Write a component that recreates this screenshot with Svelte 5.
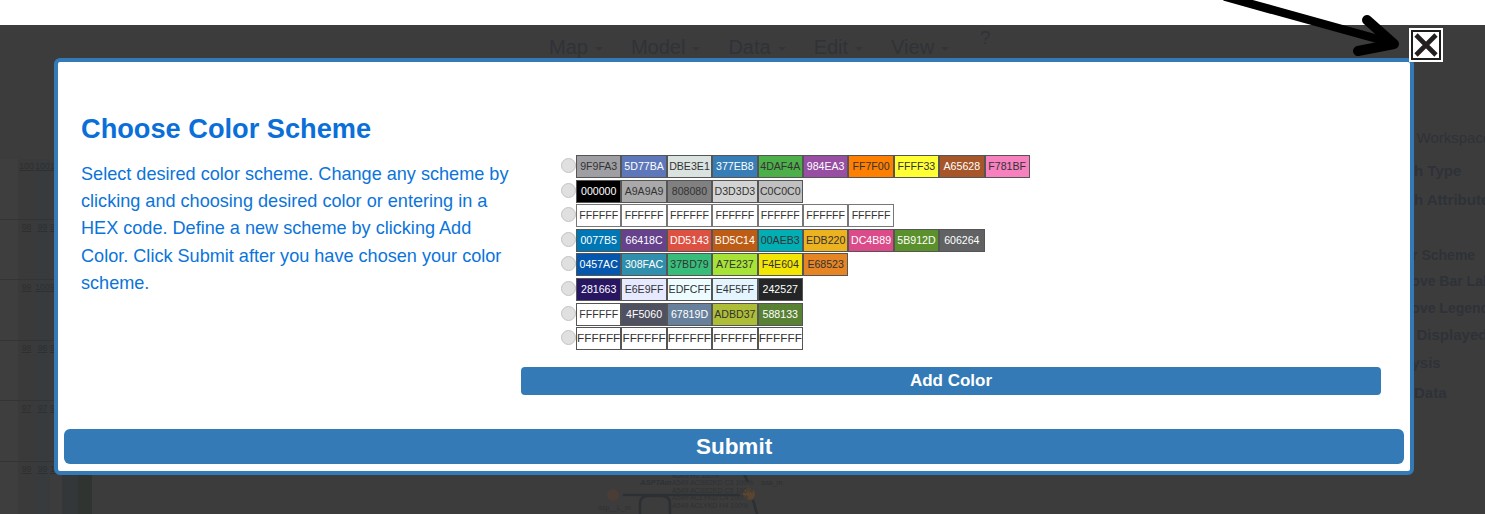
<script>
  const NAV = ["Map", "Model", "Data", "Edit", "View"];

  const SIDE = [
    { label: "Load Workspace", cls: "ws" },
    { label: "Graph Type", cls: "type" },
    { label: "Graph Attribute", cls: "attr" },
    { label: "Color Scheme", cls: "small" },
    { label: "Remove Bar Labels", cls: "small" },
    { label: "Remove Legend", cls: "small" },
    { label: "Bars Displayed", cls: "disp" },
    { label: "Analysis", cls: "type" },
    { label: "Raw Data", cls: "type" },
  ];

  const HEAT = [
    ["100", "100", "100"],
    ["98", "99", "98"],
    ["99", "100", "99"],
    ["98", "98", "97"],
    ["97", "97", "98"],
    ["99", "99", "100"],
  ];

  // light = white label, otherwise dark label
  const SCHEMES = [
    [["9F9FA3"], ["5D77BA", 1], ["DBE3E1"], ["377EB8", 1], ["4DAF4A"], ["984EA3", 1], ["FF7F00"], ["FFFF33"], ["A65628", 1], ["F781BF"]],
    [["000000", 1], ["A9A9A9"], ["808080"], ["D3D3D3"], ["C0C0C0"]],
    [["FFFFFF"], ["FFFFFF"], ["FFFFFF"], ["FFFFFF"], ["FFFFFF"], ["FFFFFF"], ["FFFFFF"]],
    [["0077B5", 1], ["66418C", 1], ["DD5143", 1], ["BD5C14", 1], ["00AEB3"], ["EDB220"], ["DC4B89", 1], ["5B912D", 1], ["606264", 1]],
    [["0457AC", 1], ["308FAC", 1], ["37BD79"], ["A7E237"], ["F4E604"], ["E68523"]],
    [["281663", 1], ["E6E9FF"], ["EDFCFF"], ["E4F5FF"], ["242527", 1]],
    [["FFFFFF"], ["4F5060", 1], ["67819D", 1], ["ADBD37"], ["588133", 1]],
    [["FFFFFF"], ["FFFFFF"], ["FFFFFF"], ["FFFFFF"], ["FFFFFF"]],
  ];
</script>

<div class="page">
  <div class="backdrop">
    <nav class="nav">
      {#each NAV as item}
        <span class="nav-item">{item}<i class="caret"></i></span>
      {/each}
      <span class="help">?</span>
    </nav>

    <div class="under">
      <div class="heat">
        {#each HEAT as row}
          <div class="heat-row">
            <span class="heat-cell"></span>
            <span class="heat-cell c1">{row[0]}</span>
            <span class="heat-cell c2">{row[1]}</span>
            <span class="heat-cell c3">{row[2]}</span>
            <span class="heat-cell c4"></span>
            <span class="heat-cell c5"></span>
          </div>
        {/each}
      </div>
      <ul class="side">
        {#each SIDE as item}
          <li class={item.cls}>{item.label}</li>
        {/each}
      </ul>
    </div>

    <svg class="network" width="220" height="44" viewBox="0 0 220 44">
      <circle cx="23" cy="25" r="6" fill="#4a3d35" />
      <circle cx="159" cy="24" r="6" fill="#5a4630" />
      <path d="M33 25H150M50 44V34q0-8 8-8h14q8 0 8 8v10M152 0l6 12M163 30l4 14" fill="none" stroke="#2c3033" stroke-width="2.6" />
      <g fill="#2e3135" font-size="7">
        <text x="50" y="15" font-weight="700" font-style="italic" font-size="7.5">ASPTAm</text>
        <text x="82" y="8">A549 H1 100%</text>
        <text x="82" y="15">A549 ACSS2KD C3 100%</text>
        <text x="82" y="23">A549 ACSS2KD C5 100%</text>
        <text x="82" y="30">A549 ACLYKD C4 100%</text>
        <text x="82" y="38">A549 ACLYKD H4 100%</text>
        <text x="171" y="15">aaa_m</text>
        <text x="8" y="40">asp__L_m</text>
      </g>
    </svg>
  </div>

  <section class="modal">
    <div class="modal-body">
      <div class="intro">
        <h2>Choose Color Scheme</h2>
        <p>Select desired color scheme. Change any scheme by clicking and choosing desired color or entering in a HEX code. Define a new scheme by clicking Add Color. Click Submit after you have chosen your color scheme.</p>
      </div>
      <div class="schemes">
        <div class="scheme-list">
          {#each SCHEMES as colors, i}
            <div class="scheme">
              <span class="radio"></span>
              {#each colors as c}
                <span
                  class="swatch"
                  class:light={c[1]}
                  class:wide={i === 7}
                  class:pale={i === 2}
                  style="background:#{c[0]}"
                >{c[0]}</span>
              {/each}
            </div>
          {/each}
        </div>
        <button class="add">Add Color</button>
      </div>
    </div>
    <button class="submit">Submit</button>
  </section>

  <svg class="arrow" width="1485" height="70" viewBox="0 0 1485 70">
    <g fill="none" stroke="#000" stroke-linecap="round" stroke-linejoin="round">
      <path d="M1226-3L1392 43" stroke-width="8.5" />
      <path d="M1367 20L1394 44L1358 51" stroke-width="10" />
    </g>
  </svg>

  <button class="close" aria-label="Close">
    <svg width="34" height="34" viewBox="0 0 34 34">
      <rect x="3" y="3" width="28" height="28" fill="#fff" stroke="#1c1c1e" stroke-width="2" />
      <path d="M7 7L27 27M27 7L7 27" stroke="#231f20" stroke-width="4.6" />
    </svg>
  </button>
</div>

<style>
  :global(body) {
    margin: 0;
    background: #fff;
  }

  .page {
    position: relative;
    width: 1485px;
    height: 514px;
    overflow: hidden;
    padding-top: 25px;
    box-sizing: border-box;
    font-family: "Liberation Sans", Arial, sans-serif;
  }

  .backdrop {
    height: 489px;
    background: #3c3c3c;
    overflow: hidden;
  }

  .nav {
    display: flex;
    align-items: baseline;
    height: 33px;
    padding-left: 549px;
    font-size: 20px;
    line-height: 44px;
    color: #2f3338;
  }

  .nav-item {
    margin-right: 28px;
    white-space: nowrap;
  }

  .caret {
    display: inline-block;
    margin-left: 7px;
    vertical-align: middle;
    border-top: 4px solid #333538;
    border-left: 4px solid transparent;
    border-right: 4px solid transparent;
  }

  .help {
    margin-left: 3px;
    position: relative;
    top: -10px;
    font-size: 19px;
  }

  .under {
    display: flex;
    justify-content: space-between;
    height: 431px;
  }

  .heat {
    margin-top: 101px;
    width: 92px;
    flex: none;
  }

  .heat-row {
    display: flex;
    height: 60.6px;
    box-sizing: border-box;
    border-bottom: 1px solid #343434;
  }

  .heat-cell {
    width: 18px;
    background: #3e3e3e;
    font-size: 8.6px;
    line-height: 14px;
    color: #2d2f31;
    text-decoration: underline;
    text-align: center;
    white-space: nowrap;
  }

  .heat-cell.c1 {
    width: 17px;
    background: #3a3a3a;
  }

  .heat-cell.c2 {
    width: 15px;
    background: #383b3d;
  }

  .heat-cell.c3 {
    width: 12px;
    text-align: left;
    background: #3c3c3c;
  }

  .heat-cell.c4 {
    width: 16px;
    background: #33373a;
  }

  .heat-cell.c5 {
    width: 14px;
    background: #303430;
  }

  .side {
    list-style: none;
    margin: 0;
    padding: 62px 0 0 0;
    width: 106px;
    flex: none;
    color: #2e3238;
    font-weight: 700;
    font-size: 15px;
    white-space: nowrap;
  }

  .side li.ws {
    font-weight: 400;
    line-height: 36px;
  }

  .side li.type {
    line-height: 30px;
  }

  .side li.attr {
    line-height: 28px;
    margin-bottom: 28px;
  }

  .side li.disp {
    line-height: 27px;
  }

  .side li.small {
    font-size: 14px;
    line-height: 26.4px;
    padding-left: 2px;
  }

  .network {
    position: absolute;
    left: 590px;
    top: 470px;
  }

  .modal {
    position: absolute;
    left: 54px;
    top: 58px;
    width: 1360px;
    height: 417px;
    box-sizing: border-box;
    border: 4px solid #337ab7;
    border-radius: 6px;
    background: #fff;
    display: flex;
    flex-direction: column;
  }

  .modal-body {
    display: flex;
    flex: 1;
    padding: 51px 29px 0 23px;
  }

  .intro {
    width: 440px;
    flex: none;
    color: #0a74da;
  }

  .intro h2 {
    margin: 0 0 16px;
    font-size: 27.2px;
    line-height: 32px;
    font-weight: 700;
    color: #0a6fd8;
  }

  .intro p {
    margin: 0;
    font-size: 18.1px;
    line-height: 27.2px;
  }

  .schemes {
    flex: 1;
    display: flex;
    flex-direction: column;
    padding-top: 42px;
  }

  .scheme-list {
    display: flex;
    flex-direction: column;
    gap: 1.6px;
    padding-left: 40px;
    height: 212px;
  }

  .scheme {
    display: flex;
    align-items: center;
    height: 23px;
  }

  .radio {
    width: 13px;
    height: 13px;
    margin-bottom: 2px;
    flex: none;
    border: 1px solid #c4c4c4;
    border-radius: 50%;
    background: #e0e0e0;
  }

  .swatch {
    width: 45.4px;
    height: 23px;
    flex: none;
    box-sizing: border-box;
    border: 1px solid #555;
    font-size: 10.6px;
    line-height: 21px;
    text-align: center;
    color: #333;
    overflow: hidden;
    white-space: nowrap;
  }

  .swatch.light {
    color: #fff;
  }

  .swatch.pale {
    border-color: #777;
  }

  .swatch.wide {
    font-size: 11.8px;
    color: #333;
  }

  .add,
  .submit {
    display: block;
    border: 0;
    background: #337ab7;
    color: #fff;
    font-family: inherit;
    font-weight: 700;
    text-align: center;
    padding: 0;
  }

  .add {
    height: 28px;
    border-radius: 4px;
    font-size: 17px;
  }

  .submit {
    flex: none;
    height: 35px;
    margin: 0 6px 7px;
    border-radius: 6px;
    font-size: 22.5px;
  }

  .arrow {
    position: absolute;
    left: 0;
    top: 0;
    pointer-events: none;
  }

  .close {
    position: absolute;
    left: 1409px;
    top: 28px;
    width: 34px;
    height: 34px;
    padding: 0;
    border: 0;
    background: #fff;
    line-height: 0;
  }
</style>
